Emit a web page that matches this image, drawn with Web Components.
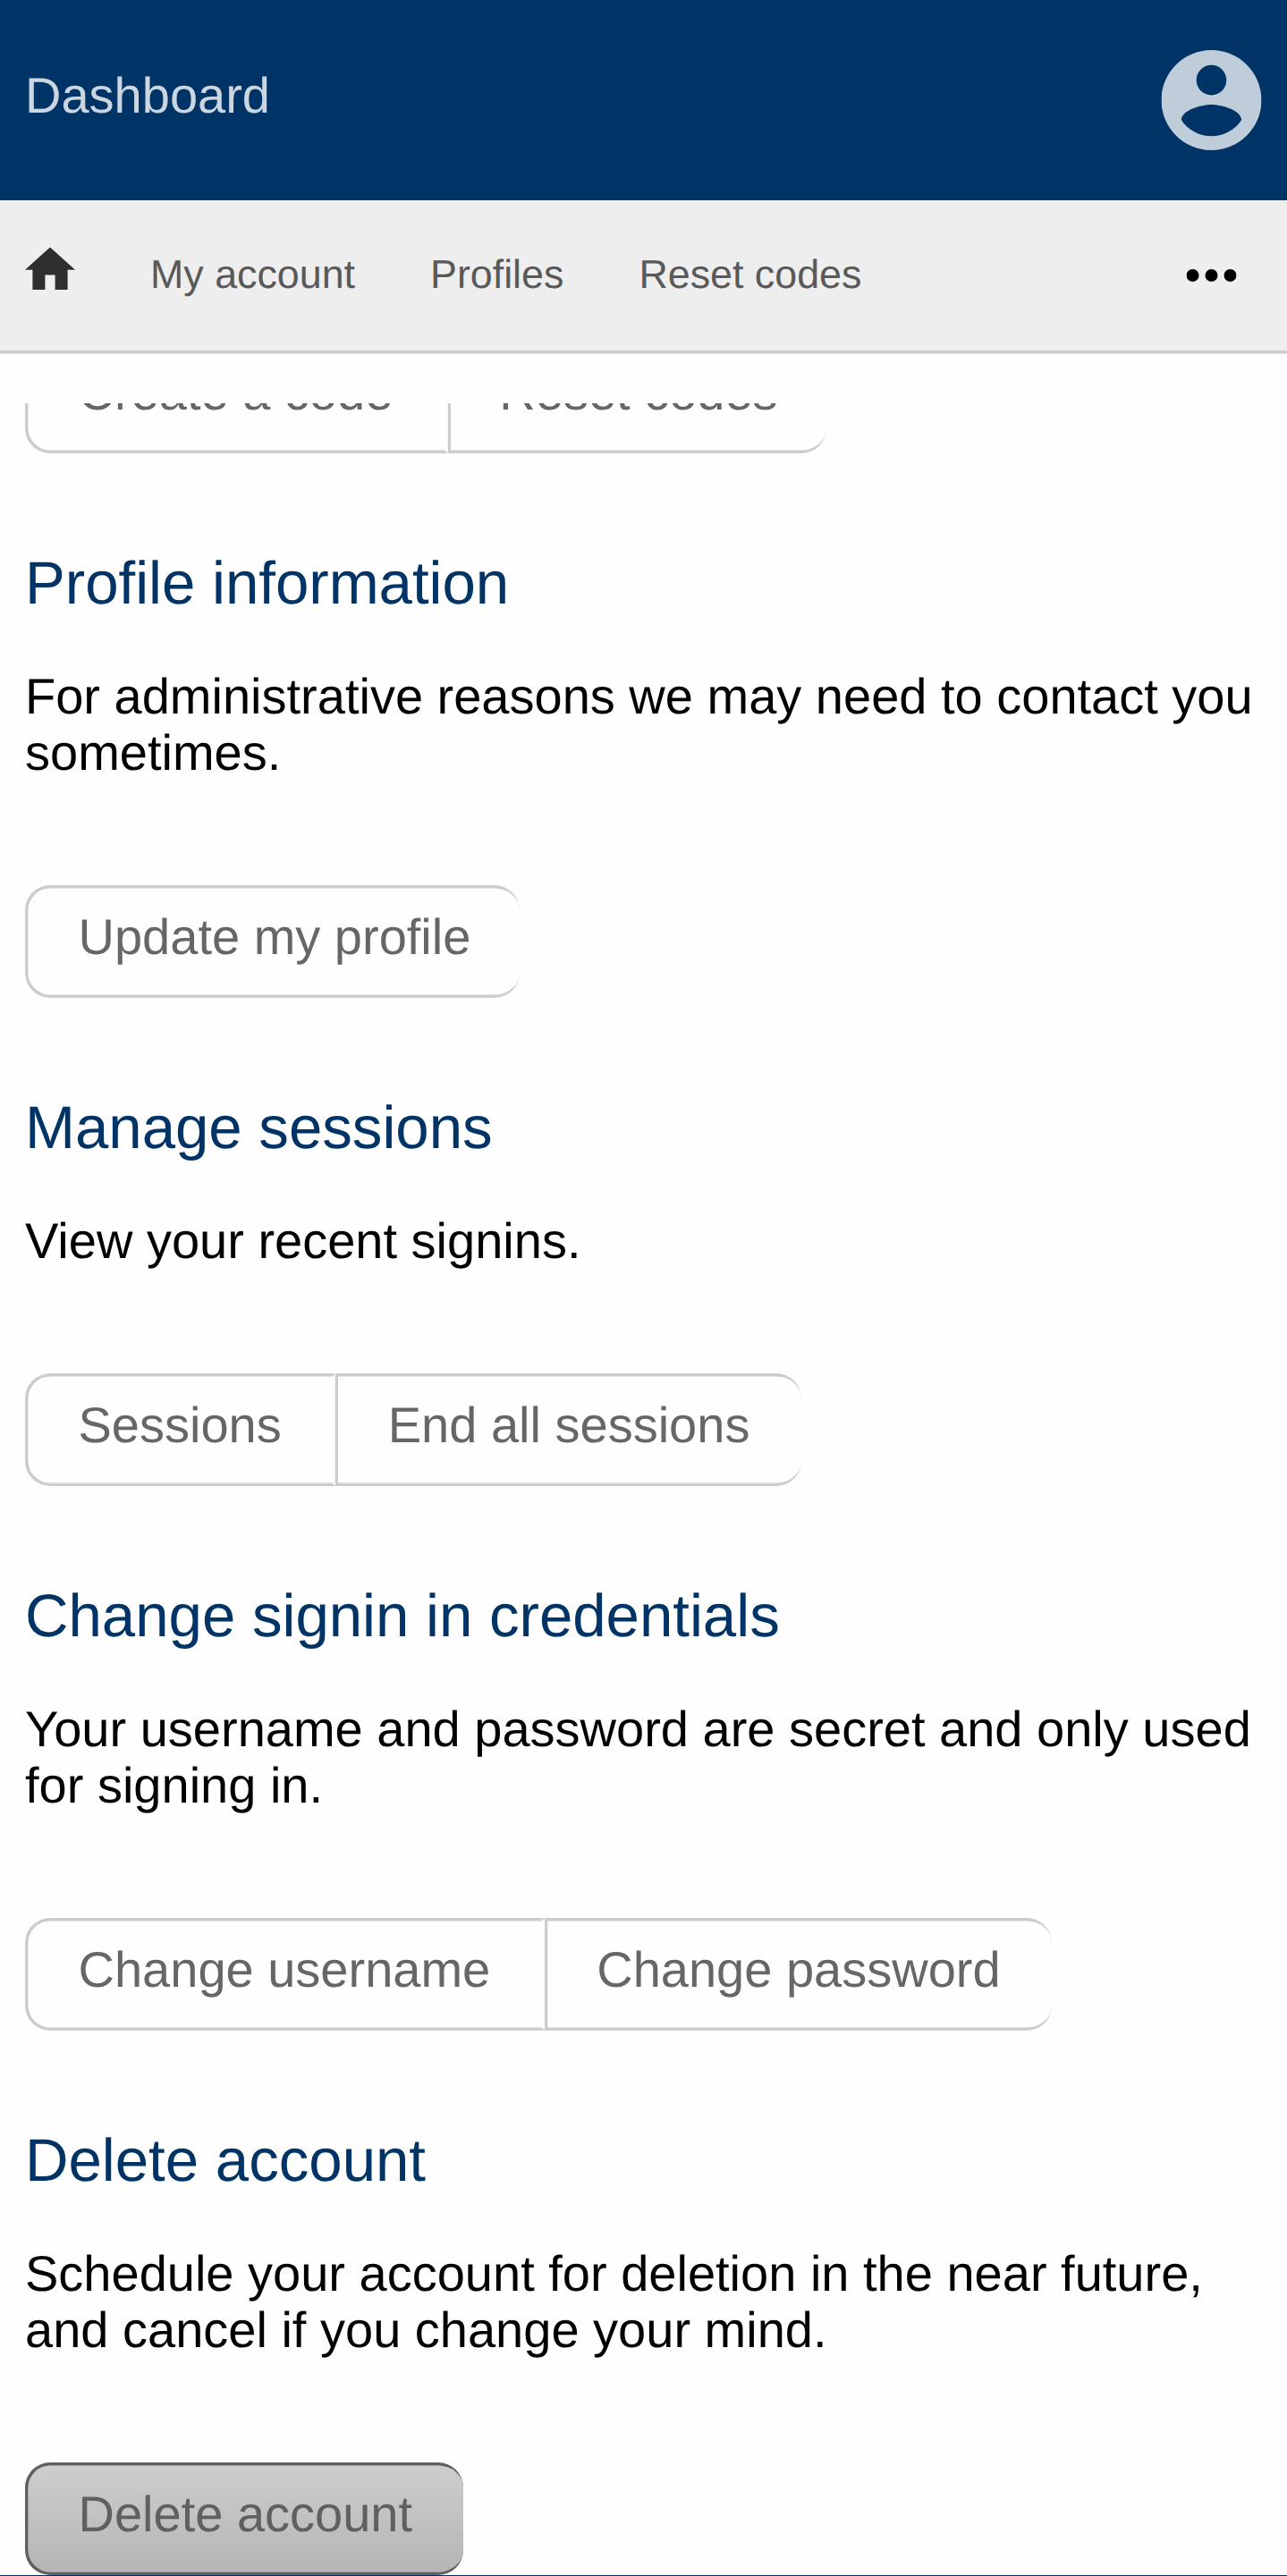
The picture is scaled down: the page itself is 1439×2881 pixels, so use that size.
<!DOCTYPE html>
<html lang="en">
<head>
<meta charset="utf-8">
<title>Dashboard</title>
<style>
html,body{margin:0;padding:0;background:#036;overflow:hidden}
body{height:2881px;font-family:"Liberation Sans",Arial,sans-serif;font-size:16px;line-height:18px;text-rendering:geometricPrecision}
</style>
</head>
<body>
<app-shell>
  <app-header slot="header">Dashboard</app-header>
  <app-nav slot="nav">
    <nav-link>My account</nav-link>
    <nav-link>Profiles</nav-link>
    <nav-link>Reset codes</nav-link>
  </app-nav>
  <button-group><action-button>Create a code</action-button><action-button last>Reset codes</action-button></button-group>
  <settings-section>
    <span slot="title">Profile information</span>
    For administrative reasons we may need to contact you sometimes.
    <button-group slot="actions"><action-button last>Update my profile</action-button></button-group>
  </settings-section>
  <settings-section>
    <span slot="title">Manage sessions</span>
    View your recent signins.
    <button-group slot="actions"><action-button>Sessions</action-button><action-button last>End all sessions</action-button></button-group>
  </settings-section>
  <settings-section>
    <span slot="title">Change signin in credentials</span>
    Your username and password are secret and only used for signing in.
    <button-group slot="actions"><action-button>Change username</action-button><action-button last>Change password</action-button></button-group>
  </settings-section>
  <settings-section>
    <span slot="title">Delete account</span>
    Schedule your account for deletion in the near future, and cancel if you change your mind.
    <button-group slot="actions"><action-button last active>Delete account</action-button></button-group>
  </settings-section>
</app-shell>
<script>
const define = (name, html) => {
  const template = document.createElement('template');
  template.innerHTML = html;
  customElements.define(name, class extends HTMLElement {
    constructor() {
      super();
      this.attachShadow({mode: 'open'}).append(template.content.cloneNode(true));
    }
  });
};

define('app-shell', `
<style>
:host{display:block;width:1439px;height:2880px;overflow:hidden;background:#fefefe}
.frame{display:flex;flex-direction:column;width:412px;height:824px;transform:scale(3.5);transform-origin:0 0}
main{flex:1;min-height:0;margin-top:16px;padding:0 8.857px 0 8px;overflow:hidden}
.content{margin-top:-20px;transform:translateY(-.142857px)}
</style>
<div class="frame">
<slot name="header"></slot>
<slot name="nav"></slot>
<main><div class="content"><slot></slot></div></main>
</div>`);

define('app-header', `
<style>
:host{display:flex;flex:none;justify-content:space-between;align-items:center;box-sizing:border-box;height:64px;padding:0 8.857px 0 8px;background:#036;color:#ccd6e0}
svg{display:block;width:32px;height:32px;fill:#bfccd9}
</style>
<span><slot></slot></span>
<svg viewBox="2 2 20 20"><path d="M12 2C6.48 2 2 6.48 2 12s4.48 10 10 10 10-4.48 10-10S17.52 2 12 2zm0 3c1.66 0 3 1.34 3 3s-1.34 3-3 3-3-1.34-3-3 1.34-3 3-3zm0 14.2c-2.5 0-4.71-1.28-6-3.22.03-1.99 4-3.08 6-3.08 1.99 0 5.97 1.09 6 3.08-1.29 1.94-3.5 3.22-6 3.22z"/></svg>`);

define('app-nav', `
<style>
:host{display:flex;flex:none;align-items:center;gap:24px;box-sizing:border-box;height:49px;padding:0 16.857px 0 8px;background:#eee;border-bottom:1px solid #ccc;font-size:12.8px;line-height:15px;color:#595959}
svg{display:block;flex:none}
.home{width:16px;height:13.6px;fill:#2f2f2f;margin-bottom:4px}
.more{width:16px;height:4px;margin-left:auto;fill:#000}
</style>
<svg class="home" viewBox="2 3 20 17"><path d="M10 20v-5.9h4V20h5v-8h3L12 3 2 12h3v8z"/></svg>
<slot></slot>
<svg class="more" viewBox="0 0 16 4"><circle cx="2" cy="2" r="2"/><circle cx="8" cy="2" r="2"/><circle cx="14" cy="2" r="2"/></svg>`);

define('nav-link', `
<style>:host{display:block;white-space:nowrap;margin-bottom:1px}</style><slot></slot>`);

define('settings-section', `
<style>
:host{display:block;padding-top:32px}
h2{margin:0 0 16px;font-size:19.2px;line-height:22px;font-weight:400;color:#036}
p{margin:0 0 32px;color:#000}
</style>
<h2><slot name="title"></slot></h2>
<p><slot></slot></p>
<slot name="actions"></slot>`);

define('button-group', `
<style>
:host{display:flex}
::slotted(action-button:first-child){border-top-left-radius:8px;border-bottom-left-radius:8px}
::slotted(action-button:last-child){border-top-right-radius:8px;border-bottom-right-radius:8px}
</style><slot></slot>`);

define('action-button', `
<style>
:host{display:block;box-sizing:border-box;height:36px;padding:8px 16px;border:1px solid #ccc;border-right-color:transparent;color:#666;white-space:nowrap}
:host([last]){border-right:0}
:host([active]){border-color:#606060;color:#606060;background:linear-gradient(#cdcdcd,#b5b5b5)}
</style><slot></slot>`);
</script>
</body>
</html>
